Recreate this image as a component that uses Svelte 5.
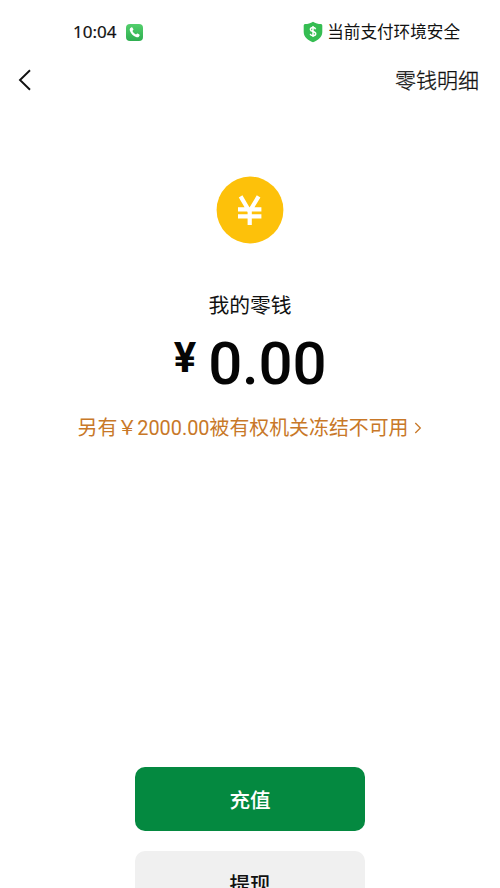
<div class="screen">
    <header class="status">
        <div class="clock">
            <span>{time}</span>
            <svg width="17" height="17" viewBox="0 0 17 17">
                <defs>
                    <linearGradient id="call" x1="0" y1="0" x2="0" y2="1">
                        <stop offset="0" stop-color="#53cf6c" />
                        <stop offset="1" stop-color="#2eae50" />
                    </linearGradient>
                </defs>
                <rect width="17" height="17" rx="4" fill="url(#call)" />
                <path d="M4.1 4.3 5.4 3.2Q6 3 6.4 3.6L7.4 5.2Q7.6 5.7 7.2 6.1L6.4 6.9Q7.5 9.4 10 10.5L10.8 9.7Q11.2 9.3 11.7 9.6L13.3 10.6Q13.9 11 13.6 11.6L12.6 12.9Q11.7 13.7 10 13Q5.7 11.3 4 7Q3.3 5.3 4.1 4.3Z" fill="#fff" />
            </svg>
        </div>
        <div class="security">
            <svg width="20" height="22" viewBox="0 0 20 22">
                <path d="M10 .7C12.5 2.5 15.2 3 18 3.1Q19.3 3.2 19.3 4.5V11C19.3 16 15 19.2 10 21.3C5 19.2.7 16 .7 11V4.5Q.7 3.2 2 3.1C4.8 3 7.5 2.5 10 .7Z" fill="#35bd52" />
                <path d="M12.6 8.2C12.2 6.9 11.2 6.5 10 6.5C8.5 6.5 7.4 7.2 7.4 8.5C7.4 11.2 12.7 9.8 12.7 12.7C12.7 14 11.5 14.7 10 14.7C8.6 14.7 7.5 14.1 7.2 12.8M10 5.1V16" fill="none" stroke="#fff" stroke-width="1.5" />
            </svg>
            <span>当前支付环境安全</span>
        </div>
    </header>

    <nav>
        <button class="back" aria-label="返回">
            <svg width="14" height="22" viewBox="0 0 14 22">
                <path d="M12 1.2 2 11 12 20.8" fill="none" stroke="#111" stroke-width="1.9" />
            </svg>
        </button>
        <button class="details">零钱明细</button>
    </nav>

    <main>
        <svg class="coin" width="68" height="68" viewBox="0 0 68 68">
            <circle cx="34" cy="34" r="33.4" fill="#fdc10a" />
            <path d="M24.6 20.4 33.5 35.5 42.6 20.4M22 33.4H45.4M22 40.4H45.4M33.7 33V49" fill="none" stroke="#fff" stroke-width="4.2" />
        </svg>
        <h1>我的零钱</h1>
        <div class="balance">
            <span class="currency">¥</span>
            <span class="amount">{balance}</span>
        </div>
        <button class="frozen">
            <span>另有￥{frozen}被有权机关冻结不可用</span>
            <svg width="8" height="12" viewBox="0 0 8 12">
                <path d="M1.3 1 6.3 6 1.3 11" fill="none" stroke="#c87828" stroke-width="1.3" />
            </svg>
        </button>
    </main>

    <footer>
        <button class="action primary">充值</button>
        <button class="action">提现</button>
    </footer>
</div>

<script>
const time = "10:04"
const balance = "0.00"
const frozen = "2000.00"
</script>

<style>
:global(body) {
    background-color: white;
    overflow: hidden;
}
.screen {
    display: flex;
    flex-direction: column;
    box-sizing: border-box;
    height: 888px;
    overflow: hidden;
    color: #111;
    font-family: Roboto, "Noto Sans CJK SC", sans-serif;
}
button {
    border: none;
    padding: 0;
    background: none;
    color: inherit;
    font: inherit;
}
svg {
    display: block;
    flex: none;
}
.status {
    display: flex;
    justify-content: space-between;
    align-items: center;
    height: 24px;
    padding: 20px 40px 0 73px;
}
.clock {
    display: flex;
    align-items: center;
    gap: 10px;
    font: 400 17px/24px "Noto Sans", sans-serif;
    -webkit-text-stroke: .2px #111;
}
.security {
    display: flex;
    align-items: center;
    gap: 4px;
    font-size: 16.6px;
    line-height: 24px;
}
.security span {
    padding-top: 2px;
}
.security svg {
    margin-top: -1px;
}
nav {
    display: flex;
    justify-content: space-between;
    align-items: center;
    height: 32px;
    margin-top: 20px;
    padding: 0 21px 0 18px;
}
.details {
    padding-top: 1px;
    font-size: 21px;
    font-weight: 300;
    line-height: 32px;
    -webkit-text-stroke: .3px #111;
}
main {
    display: flex;
    flex-direction: column;
    align-items: center;
    padding-top: 80px;
}
h1 {
    margin: 46px 0 0;
    font-size: 20.8px;
    font-weight: 400;
    line-height: 32px;
}
.balance {
    display: flex;
    align-items: flex-start;
    gap: 12px;
    height: 70px;
    margin-top: 6px;
    color: #050505;
    font-weight: 500;
}
.currency {
    font-size: 42px;
    font-weight: 700;
    line-height: 60px;
}
.amount {
    font-size: 60px;
    line-height: 71px;
    letter-spacing: -.2px;
}
.frozen {
    display: flex;
    align-items: center;
    gap: 6px;
    margin-top: 16px;
    color: #c87828;
    font-size: 19.9px;
    line-height: 30px;
}
.frozen svg {
    margin-top: -3px;
}
footer {
    display: flex;
    flex-direction: column;
    align-items: center;
    gap: 20px;
    margin-top: auto;
    margin-bottom: -26px;
}
.action {
    width: 230px;
    height: 63.5px;
    flex: none;
    padding-top: 1px;
    border-radius: 10px;
    background-color: #f0f0f0;
    font-size: 20.6px;
    font-weight: 500;
}
.action.primary {
    background-color: #048940;
    color: white;
}
</style>
